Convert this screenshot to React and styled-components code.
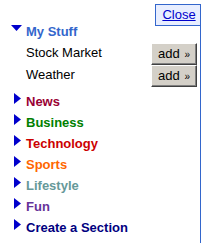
import React from "react";
import styled, { createGlobalStyle } from "styled-components";

const Global = createGlobalStyle`
  html, body { margin: 0; padding: 0; background: #fff; }
  body {
    font-family: Arial, "Liberation Sans", sans-serif;
    font-size: 13px;
    color: #000;
  }
`;

const Panel = styled.div`
  position: relative;
  width: 201px;
  margin-top: 4px;
  min-height: 239px;
  border-right: 1px solid #3366cc;
  padding-top: 17px;
  box-sizing: border-box;
`;

const CloseBox = styled.div`
  position: absolute;
  top: 0;
  right: 0;
  width: 45px;
  height: 22px;
  box-sizing: border-box;
  border: 1px solid #3366cc;
  border-right: none;
  background: #e8eeff;
  display: flex;
  align-items: center;
  justify-content: center;
  padding-left: 2px;
`;

const CloseLink = styled.a`
  color: #0000cc;
  text-decoration: underline;
  font-size: 13px;
  line-height: 16px;
  cursor: pointer;
`;

const Header = styled.div`
  display: flex;
  align-items: flex-start;
  height: 21px;
  line-height: 21px;
  font-weight: bold;
  color: #3366cc;
`;

const DownIcon = styled.svg`
  width: 11px;
  height: 6px;
  margin: 4px 4px 0 11px;
  flex: none;
`;

const SubRow = styled.div`
  display: flex;
  align-items: flex-start;
  justify-content: space-between;
  height: 22px;
  line-height: 22px;
  padding: 0 3px 0 26px;
`;

const AddButton = styled.button`
  width: 46px;
  height: 22px;
  margin-top: 1px;
  padding: 0;
  box-sizing: border-box;
  background: #d4d0c8;
  font-family: Arial, "Liberation Sans", sans-serif;
  font-size: 13px;
  color: #000;
  border: 1px solid;
  border-color: #ffffff #404040 #404040 #ffffff;
  box-shadow: inset -1px -1px 0 #808080;
  line-height: 18px;
`;

const Raquo = styled.span`
  font-size: 10px;
  margin-left: 1px;
`;

const Categories = styled.div`
  margin-top: 5px;
`;

const Cat = styled.div`
  display: flex;
  align-items: flex-start;
  height: 21px;
  line-height: 21px;
  font-weight: bold;
  color: ${(p) => p.$color};
`;

const RightIcon = styled.svg`
  width: 7px;
  height: 11px;
  margin: 2px 5px 0 14px;
  flex: none;
`;

const cats = [
  ["News", "#990033"],
  ["Business", "#008000"],
  ["Technology", "#cc0000"],
  ["Sports", "#ff6600"],
  ["Lifestyle", "#669999"],
  ["Fun", "#663399"],
  ["Create a Section", "#000080"],
];

export default function App() {
  return (
    <>
      <Global />
      <Panel>
        <CloseBox>
          <CloseLink>Close</CloseLink>
        </CloseBox>
        <Header>
          <DownIcon viewBox="0 0 11 6">
            <polygon points="0,0 11,0 5.5,6" fill="#0000cc" />
          </DownIcon>
          My Stuff
        </Header>
        <SubRow>
          <span>Stock Market</span>
          <AddButton>add <Raquo>»</Raquo></AddButton>
        </SubRow>
        <SubRow>
          <span>Weather</span>
          <AddButton>add <Raquo>»</Raquo></AddButton>
        </SubRow>
        <Categories>
          {cats.map(([name, color]) => (
            <Cat key={name} $color={color}>
              <RightIcon viewBox="0 0 7 11">
                <polygon points="0,0 7,5.5 0,11" fill="#0000cc" />
              </RightIcon>
              {name}
            </Cat>
          ))}
        </Categories>
      </Panel>
    </>
  );
}
